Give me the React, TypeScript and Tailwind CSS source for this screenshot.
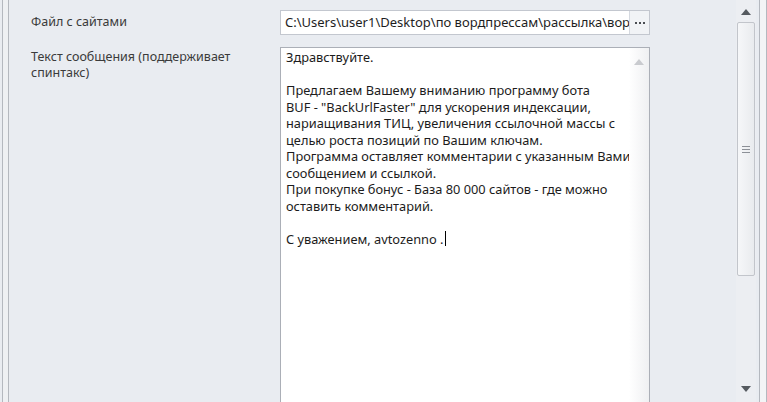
const lines = [
  "Здравствуйте.",
  "",
  "Предлагаем Вашему вниманию программу бота",
  'BUF - "BackUrlFaster" для ускорения индексации,',
  "нариащивания ТИЦ, увеличения ссылочной массы с",
  "целью роста позиций по Вашим ключам.",
  "Программа оставляет комментарии с указанным Вами",
  "сообщением и ссылкой.",
  "При покупке бонус - База 80 000 сайтов - где можно",
  "оставить комментарий.",
  "",
];

const ArrowUp = ({ color }: { color: string }) => (
  <svg width="10" height="6" viewBox="0 0 10 6">
    <path d="M0 6 L5 0 L10 6 Z" fill={color} />
  </svg>
);

const ArrowDown = ({ color }: { color: string }) => (
  <svg width="10" height="6" viewBox="0 0 10 6">
    <path d="M0 0 L10 0 L5 6 Z" fill={color} />
  </svg>
);

const App = () => {
  return (
    <div className="flex h-[402px] w-[767px] overflow-hidden bg-[#e9ecf1] font-['Noto_Sans',sans-serif] text-[12.5px]">
      {/* left window edge */}
      <div className="ml-[2px] w-[7px] shrink-0 border-x border-[#b4b8bf] bg-[#eef0f3]" />

      {/* form */}
      <div className="flex min-w-0 flex-1 flex-col pl-[22px] pr-[86px] pt-[10px]">
        <div className="flex h-[25px] items-center">
          <div className="w-[249px] shrink-0 text-[#3b3b3b]">Файл с сайтами</div>
          <div className="flex h-full min-w-0 flex-1 border border-[#c3c7cf] bg-white">
            <div className="min-w-0 flex-1 overflow-hidden whitespace-nowrap pl-[4px] text-[13px] leading-[23px] text-[#1e1e1e]">
              C:\Users\user1\Desktop\по вордпрессам\рассылка\вордпресс\сайты.txt
            </div>
            <div className="flex w-[20px] shrink-0 items-center justify-center gap-[2px] border-l border-[#d5d9e0] bg-[#f1f3f6]">
              <div className="h-[2px] w-[2px] bg-[#4a4d52]" />
              <div className="h-[2px] w-[2px] bg-[#4a4d52]" />
              <div className="h-[2px] w-[2px] bg-[#4a4d52]" />
            </div>
          </div>
        </div>

        <div className="mt-[12px] flex min-h-0 flex-1">
          <div className="w-[249px] shrink-0 pt-[2px] leading-[16px] text-[#3b3b3b]">
            <div>Текст сообщения (поддерживает</div>
            <div>спинтакс)</div>
          </div>
          <div className="flex min-w-0 flex-1 border border-b-0 border-[#abafb7] bg-white">
            <div className="min-w-0 flex-1 whitespace-pre pl-[5px] pt-[1px] text-[12.8px] leading-[16.5px] text-[#1c1c1c]">
              {lines.map((l, i) => (
                <div key={i} className="h-[16.5px]">
                  {l}
                </div>
              ))}
              <div className="flex h-[16.5px] items-center">
                С уважением, avtozenno .
                <span className="ml-[1px] inline-block h-[15px] w-[1px] bg-black" />
              </div>
            </div>
            <div className="flex w-[20px] shrink-0 justify-center bg-gradient-to-r from-white to-[#eff0f2] pt-[11px]">
              <ArrowUp color="#c9cbcf" />
            </div>
          </div>
        </div>
      </div>

      {/* outer scrollbar */}
      <div className="flex w-[20px] shrink-0 flex-col items-center bg-[#eceef2]">
        <div className="flex h-[22px] items-center justify-center pt-[1px]">
          <ArrowUp color="#555a60" />
        </div>
        <div className="flex h-[254px] w-[18px] items-center justify-center rounded-[2px] border border-[#c2c5cb] bg-gradient-to-r from-[#f6f7f9] to-[#e9ebee]">
          <div className="flex w-[8px] flex-col gap-[2px]">
            <div className="h-[1px] bg-[#8c9097]" />
            <div className="h-[1px] bg-[#8c9097]" />
            <div className="h-[1px] bg-[#8c9097]" />
          </div>
        </div>
        <div className="flex-1" />
        <div className="flex h-[24px] items-center justify-center pb-[3px]">
          <ArrowDown color="#555a60" />
        </div>
      </div>

      {/* right window edge */}
      <div className="ml-[3px] w-[8px] shrink-0 border-x border-[#b4b8bf] bg-[#f3f4f6]" />
    </div>
  );
};

export default App;
